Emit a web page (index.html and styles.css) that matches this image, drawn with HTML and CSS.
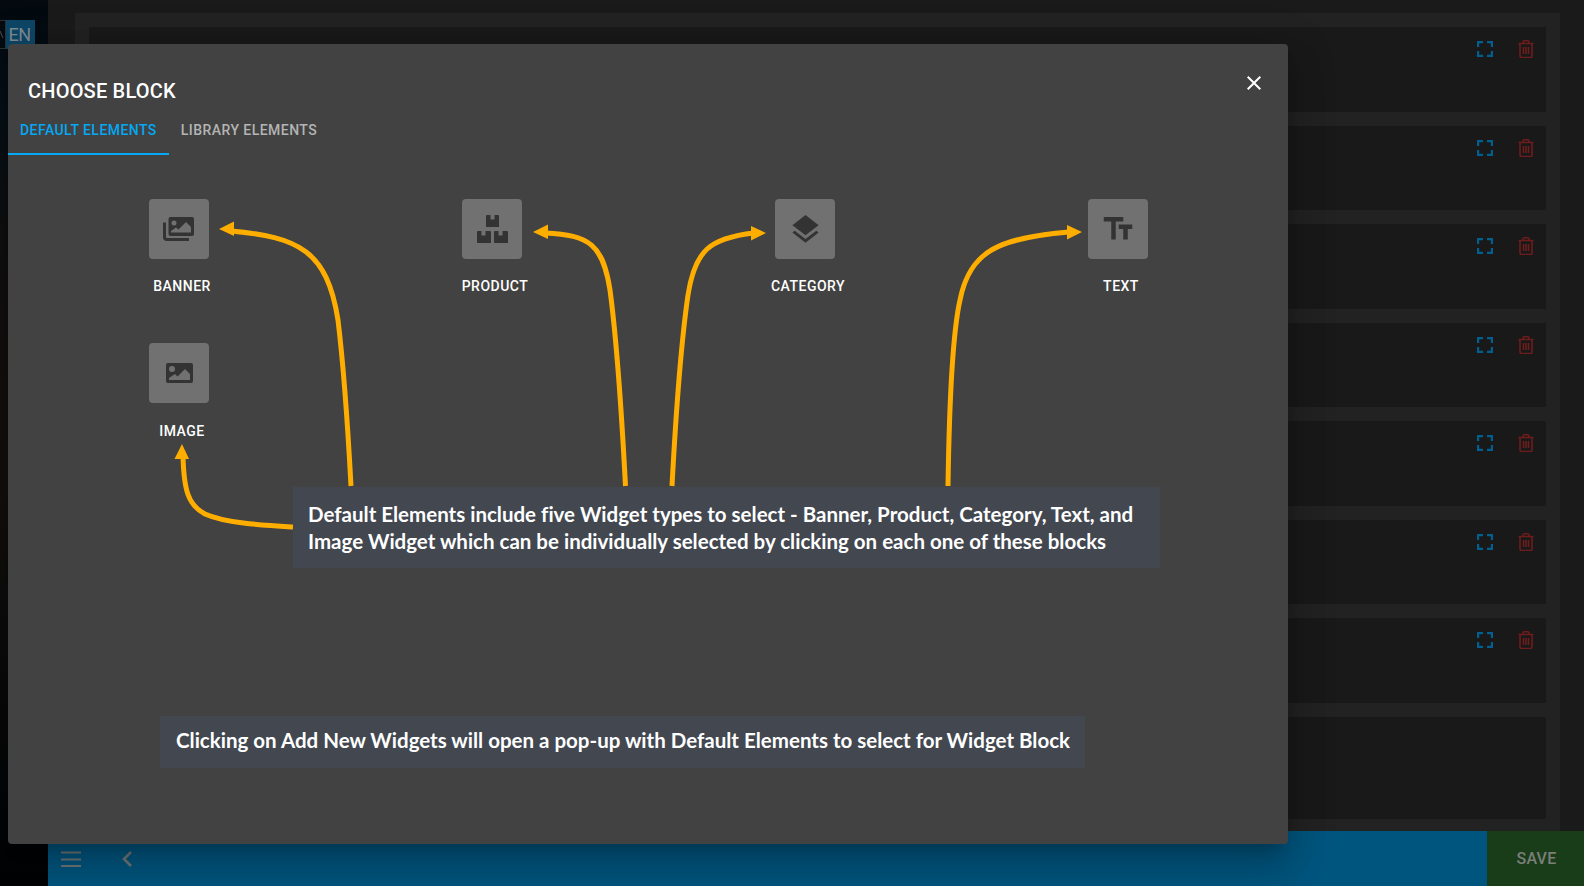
FILE: index.html
```html
<!DOCTYPE html>
<html lang="en">

<head>
    <meta charset="UTF-8">
    <meta name="viewport" content="width=device-width, initial-scale=1.0">
    <title>Choose Block</title>
    <link rel="stylesheet" href="styles.css">
</head>

<body>
    <svg class="icon-defs" width="0" height="0">
        <symbol id="icon-expand" viewBox="0 0 16 16">
            <path d="M1 6V1h5M10 1h5v5M15 10v5h-5M6 15H1v-5" fill="none" stroke="currentColor" stroke-width="2.4" />
        </symbol>
        <symbol id="icon-trash" viewBox="0 0 16 18">
            <path d="M0.5 3.5h15M5 3.5V2q0-1.2 1.2-1.2h3.6Q11 0.800 11 2v1.500M2 3.500V16q0 1.500 1.500 1.500h9Q14 17.500 14 16V3.500M5.500 7v7M8 7v7M10.500 7v7" fill="none" stroke="currentColor" stroke-width="1.600" />
        </symbol>
    </svg>

    <div class="page">
        <aside class="sidebar">
            <div class="lang-switch">
                <div class="lang-other">
                    <svg width="4" height="8" viewBox="0 0 4 8">
                        <path d="M0 0l3 7" fill="none" stroke="#4a4f52" stroke-width="1" />
                    </svg>
                </div>
                <span class="lang-active">EN</span>
            </div>
        </aside>

        <main class="main">
            <div class="content">
                <div class="panel">
                    <div class="widget-row">
                        <svg class="row-icon expand"><use href="#icon-expand" /></svg>
                        <svg class="row-icon trash"><use href="#icon-trash" /></svg>
                    </div>
                    <div class="widget-row">
                        <svg class="row-icon expand"><use href="#icon-expand" /></svg>
                        <svg class="row-icon trash"><use href="#icon-trash" /></svg>
                    </div>
                    <div class="widget-row">
                        <svg class="row-icon expand"><use href="#icon-expand" /></svg>
                        <svg class="row-icon trash"><use href="#icon-trash" /></svg>
                    </div>
                    <div class="widget-row">
                        <svg class="row-icon expand"><use href="#icon-expand" /></svg>
                        <svg class="row-icon trash"><use href="#icon-trash" /></svg>
                    </div>
                    <div class="widget-row">
                        <svg class="row-icon expand"><use href="#icon-expand" /></svg>
                        <svg class="row-icon trash"><use href="#icon-trash" /></svg>
                    </div>
                    <div class="widget-row">
                        <svg class="row-icon expand"><use href="#icon-expand" /></svg>
                        <svg class="row-icon trash"><use href="#icon-trash" /></svg>
                    </div>
                    <div class="widget-row">
                        <svg class="row-icon expand"><use href="#icon-expand" /></svg>
                        <svg class="row-icon trash"><use href="#icon-trash" /></svg>
                    </div>
                    <div class="widget-row last"></div>
                </div>
            </div>

            <div class="bottom-bar">
                <div class="bar-left">
                    <svg class="menu-icon" width="20" height="16" viewBox="0 0 20 16">
                        <path d="M0 1.500h20M0 8.500h20M0 15h20" fill="none" stroke="currentColor" stroke-width="2" />
                    </svg>
                    <svg class="back-icon" width="10" height="16" viewBox="0 0 10 16">
                        <path d="M9 1L2 8l7 7" fill="none" stroke="currentColor" stroke-width="2.600" />
                    </svg>
                </div>
                <button class="save-btn">SAVE</button>
            </div>
        </main>
    </div>

    <!-- CHOOSE BLOCK MODAL -->
    <div class="modal">
        <div class="modal-head">
            <h2>CHOOSE BLOCK</h2>
            <svg class="close-icon" width="24" height="24" viewBox="0 0 24 24">
                <path fill="currentColor" d="M19 6.410L17.590 5 12 10.590 6.410 5 5 6.410 10.590 12 5 17.590 6.410 19 12 13.410 17.590 19 19 17.590 13.410 12z" />
            </svg>
        </div>

        <div class="tabs">
            <div class="tab active">DEFAULT ELEMENTS</div>
            <div class="tab">LIBRARY ELEMENTS</div>
        </div>

        <div class="block-grid">
            <div class="block-item">
                <div class="block-tile">
                    <svg width="32" height="25" viewBox="0 0 32 25">
                        <path fill="none" stroke="#333" stroke-width="3" d="M1.500 5.500V20q0 2.500 2.500 2.500h22" />
                        <path fill="#333" fill-rule="evenodd" d="M7.500 0H29q2 0 2 2v15q0 2-2 2H7.500q-2 0-2-2V2q0-2 2-2zM11 3.500a2.500 2.500 0 1 0 0 5 2.500 2.500 0 0 0 0-5zM8 15.500h20V10l-5-5-7.500 7.500-2.500-2-5 3.500z" />
                    </svg>
                </div>
                <span class="block-label">BANNER</span>
            </div>

            <div class="block-item">
                <div class="block-tile">
                    <svg width="31" height="28" viewBox="0 0 31 28">
                        <path fill="#333" d="M10 0h3.500v4.500h4V0H21q1 0 1 1v11H9V1q0-1 1-1zM1 16h3.500v4.500h4V16H13q1 0 1 1v11H0V17q0-1 1-1zM18 16h3.500v4.500h4V16H30q1 0 1 1v11H17V17q0-1 1-1z" />
                    </svg>
                </div>
                <span class="block-label">PRODUCT</span>
            </div>

            <div class="block-item">
                <div class="block-tile">
                    <svg width="35" height="35" viewBox="0 0 24 24">
                        <path fill="#333" d="M11.990 18.540l-7.370-5.730L3 14.070l9 7 9-7-1.630-1.270-7.380 5.740zM12 16l7.360-5.730L21 9l-9-7-9 7 1.630 1.270L12 16z" />
                    </svg>
                </div>
                <span class="block-label">CATEGORY</span>
            </div>

            <div class="block-item">
                <div class="block-tile">
                    <svg width="36" height="36" viewBox="0 0 24 24">
                        <path fill="#333" d="M2.500 4v3h5v12h3V7h5V4h-13zm19 5h-9v3h3v7h3v-7h3V9z" />
                    </svg>
                </div>
                <span class="block-label">TEXT</span>
            </div>

            <div class="block-item">
                <div class="block-tile">
                    <svg width="27" height="20" viewBox="0 0 27 20">
                        <path fill="#333" fill-rule="evenodd" d="M2 0h23q2 0 2 2v16q0 2-2 2H2q-2 0-2-2V2q0-2 2-2zM6 3a3 3 0 1 0 0 6 3 3 0 0 0 0-6zM3 17h21v-6l-5-5-7.500 7.500-2.500-2.500L3 15z" />
                    </svg>
                </div>
                <span class="block-label">IMAGE</span>
            </div>
        </div>

        <!-- annotation arrows, coordinates are page pixels -->
        <svg class="arrows" width="1280" height="800" viewBox="8 44 1280 800">
            <g fill="none" stroke="#ffae00" stroke-width="5">
                <path d="M231 231C298 237 327 250 338 320C344 370 348 430 351 486" />
                <path d="M545 233C590 235 603 245 610 290C618 350 622 420 625.500 486" />
                <path d="M672 486C675 430 680 350 688 295C695 250 710 238 754 233" />
                <path d="M948 486C949 420 951 340 960 300C970 250 1000 238 1069 232" />
                <path d="M183 457C184 490 188 505 205 514C225 523 260 525 293 527" />
            </g>
            <g fill="#ffae00">
                <path d="M219 229l15-7.500v14.500z" />
                <path d="M533 232l15-7.500v14.500z" />
                <path d="M766 233l-15 7.500v-14.500z" />
                <path d="M1082 232l-15 7.500v-14.500z" />
                <path d="M182 444l-7.500 15h14.500z" />
            </g>
        </svg>

        <div class="note note-elements">
            Default Elements include five Widget types to select - Banner, Product, Category, Text, and<br>
            Image Widget which can be individually selected by clicking on each one of these blocks
        </div>
        <div class="note note-open">
            Clicking on Add New Widgets will open a pop-up with Default Elements to select for Widget Block
        </div>
    </div>
</body>

</html>
```

FILE: styles.css
```css
body {
    font-family: 'Roboto', sans-serif;
    background-color: #1a1a1a;
    margin: 0;
    height: 886px;
    overflow: hidden;
}

.icon-defs {
    display: block;
    height: 0;
}

.page {
    display: flex;
    height: 886px;
}

/* SIDEBAR */
.sidebar {
    width: 48px;
    flex-shrink: 0;
    padding-top: 20px;
    box-sizing: border-box;
    background: linear-gradient(180deg, #03090e 0%, #061018 12%, #12100f 30%, #14110f 55%, #0b0b0b 75%, #010305 100%);
}

.lang-switch {
    display: flex;
    height: 29px;
    width: 35px;
}

.lang-other {
    width: 6px;
    display: flex;
    align-items: center;
    border: 1px solid #2b3238;
    border-left: none;
    box-sizing: border-box;
}

.lang-active {
    width: 29px;
    padding-right: 2px;
    box-sizing: border-box;
    background-color: #0d4666;
    color: #7c8a92;
    font-size: 18px;
    letter-spacing: -0.5px;
    line-height: 29px;
    text-align: center;
}

/* MAIN AREA */
.main {
    flex: 1;
    display: flex;
    flex-direction: column;
    min-width: 0;
}

.content {
    flex: 1;
    padding: 13px 24px 0 27px;
    min-height: 0;
    display: flex;
}

.panel {
    flex: 1;
    display: flex;
    flex-direction: column;
    gap: 14px;
    padding: 14px 14px 12px;
    background-color: #222;
}

.widget-row {
    height: 84.5px;
    flex-shrink: 0;
    box-sizing: border-box;
    padding: 13px 12px 0 0;
    display: flex;
    justify-content: flex-end;
    align-items: flex-start;
    gap: 25px;
    background-color: #191919;
}

.widget-row.last {
    flex: 1;
}

.row-icon {
    width: 16px;
    height: 16px;
    margin-top: 1px;
}

.row-icon.expand {
    color: #005f8e;
}

.row-icon.trash {
    width: 16px;
    height: 18px;
    margin-top: 0;
    color: #6e1c1c;
}

.bottom-bar {
    height: 55px;
    flex-shrink: 0;
    display: flex;
    justify-content: space-between;
    background-color: #00557e;
}

.bar-left {
    display: flex;
    align-items: flex-start;
    gap: 41px;
    padding: 20px 0 0 13px;
    color: #6f7678;
}

.save-btn {
    width: 97px;
    border: none;
    background-color: #193c19;
    color: #7a7f7a;
    font-family: 'Roboto', sans-serif;
    font-size: 16px;
    font-weight: 500;
    letter-spacing: 0.2px;
    padding: 0 0 0 2px;
}

/* MODAL */
.modal {
    position: absolute;
    top: 44px;
    left: 8px;
    width: 1280px;
    height: 800px;
    background-color: #424242;
    border-radius: 4px;
    color: #fff;
    box-shadow: 0 11px 15px -7px rgba(0, 0, 0, 0.2), 0 24px 38px 3px rgba(0, 0, 0, 0.14), 0 9px 46px 8px rgba(0, 0, 0, 0.12);
}

.modal-head {
    display: flex;
    justify-content: space-between;
    align-items: flex-start;
    padding: 35px 22px 0 20px;
}

.modal-head h2 {
    margin: 0;
    font-size: 20px;
    font-weight: 500;
    letter-spacing: 0.2px;
    line-height: 24px;
}

.close-icon {
    margin-top: -8px;
}

.tabs {
    display: flex;
    margin-top: 4px;
}

.tab {
    height: 48px;
    padding: 0 12px;
    box-sizing: border-box;
    font-size: 14px;
    font-weight: 500;
    letter-spacing: 0.45px;
    line-height: 46px;
    color: #b4b4b4;
}

.tab.active {
    color: #03a9f4;
    border-bottom: 2px solid #03a9f4;
}

.block-grid {
    display: grid;
    grid-template-columns: repeat(4, 313px);
    grid-auto-rows: 144px;
    padding: 44px 0 0 17.5px;
}

.block-item {
    display: flex;
    flex-direction: column;
    align-items: center;
}

.block-tile {
    width: 60px;
    height: 60px;
    margin-right: 6px;
    display: flex;
    justify-content: center;
    align-items: center;
    background-color: #717171;
    border-radius: 4px;
}

.block-label {
    margin-top: 17px;
    font-size: 14px;
    font-weight: 500;
    letter-spacing: 0.5px;
    line-height: 20px;
    white-space: nowrap;
}

.block-item:nth-child(5) .block-label {
    margin-top: 18px;
}

/* ANNOTATIONS */
.arrows {
    position: absolute;
    top: 0;
    left: 0;
    pointer-events: none;
}

.note {
    position: absolute;
    box-sizing: border-box;
    background-color: #424750;
    font-family: 'Lato', sans-serif;
    font-weight: 700;
    font-size: 20.5px;
    font-variant-ligatures: none;
    line-height: 27px;
    white-space: nowrap;
    color: #fff;
}

.note-elements {
    top: 443px;
    left: 285px;
    width: 867px;
    height: 81px;
    padding: 14px 15px;
}

.note-open {
    top: 672px;
    left: 152px;
    width: 925px;
    height: 52px;
    padding: 11px 16px;
}
```
